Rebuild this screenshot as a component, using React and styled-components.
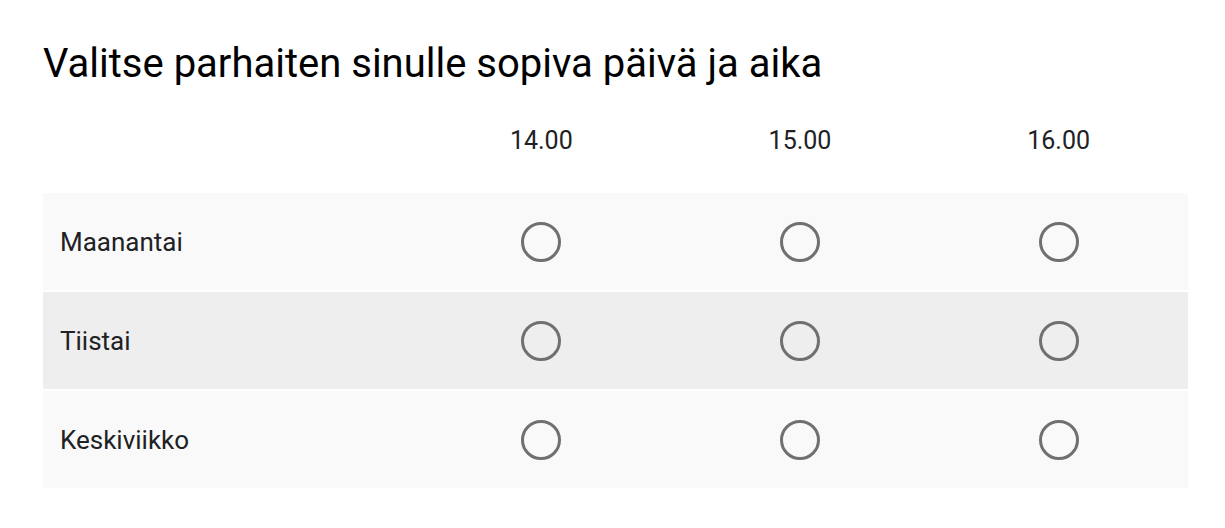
import React from "react";
import styled, { createGlobalStyle } from "styled-components";

const GlobalStyle = createGlobalStyle`
  html, body { margin: 0; padding: 0; background: #ffffff; }
  body { font-family: Roboto, "Noto Sans", Arial, sans-serif; }
`;

const Page = styled.div`
  padding: 39px 37px 0 43px;
`;

const Title = styled.h1`
  margin: 0;
  font-family: Roboto, Arial, sans-serif;
  font-weight: 400;
  font-size: 40px;
  line-height: 50px;
  color: #000000;
`;

const Grid = styled.div`
  margin-top: 37px;
  display: grid;
  grid-template-columns: 369px repeat(3, 1fr);
  row-gap: 2px;
`;

const HeaderCell = styled.div`
  height: 65px;
  display: flex;
  align-items: flex-start;
  justify-content: center;
  font-size: 25px;
  line-height: 30px;
  color: #202124;
`;

const Row = styled.div`
  display: contents;
`;

const Cell = styled.div`
  height: 97px;
  display: flex;
  align-items: center;
  justify-content: ${(p) => (p.$label ? "flex-start" : "center")};
  padding-left: ${(p) => (p.$label ? "17px" : "0")};
  background: ${(p) => (p.$shade ? "#eeeeee" : "#f9f9f9")};
  font-size: 26px;
  color: #202124;
`;

const Radio = styled.span`
  box-sizing: border-box;
  width: 40px;
  height: 40px;
  border: 3px solid #707070;
  border-radius: 50%;
  display: inline-block;
`;

const times = ["14.00", "15.00", "16.00"];
const days = ["Maanantai", "Tiistai", "Keskiviikko"];

export default function App() {
  return (
    <>
      <GlobalStyle />
      <Page>
        <Title>Valitse parhaiten sinulle sopiva päivä ja aika</Title>
        <Grid>
          <HeaderCell />
          {times.map((t) => (
            <HeaderCell key={t}>{t}</HeaderCell>
          ))}
          {days.map((d, i) => (
            <Row key={d}>
              <Cell $label $shade={i === 1}>{d}</Cell>
              {times.map((t) => (
                <Cell key={t} $shade={i === 1}>
                  <Radio />
                </Cell>
              ))}
            </Row>
          ))}
        </Grid>
      </Page>
    </>
  );
}
